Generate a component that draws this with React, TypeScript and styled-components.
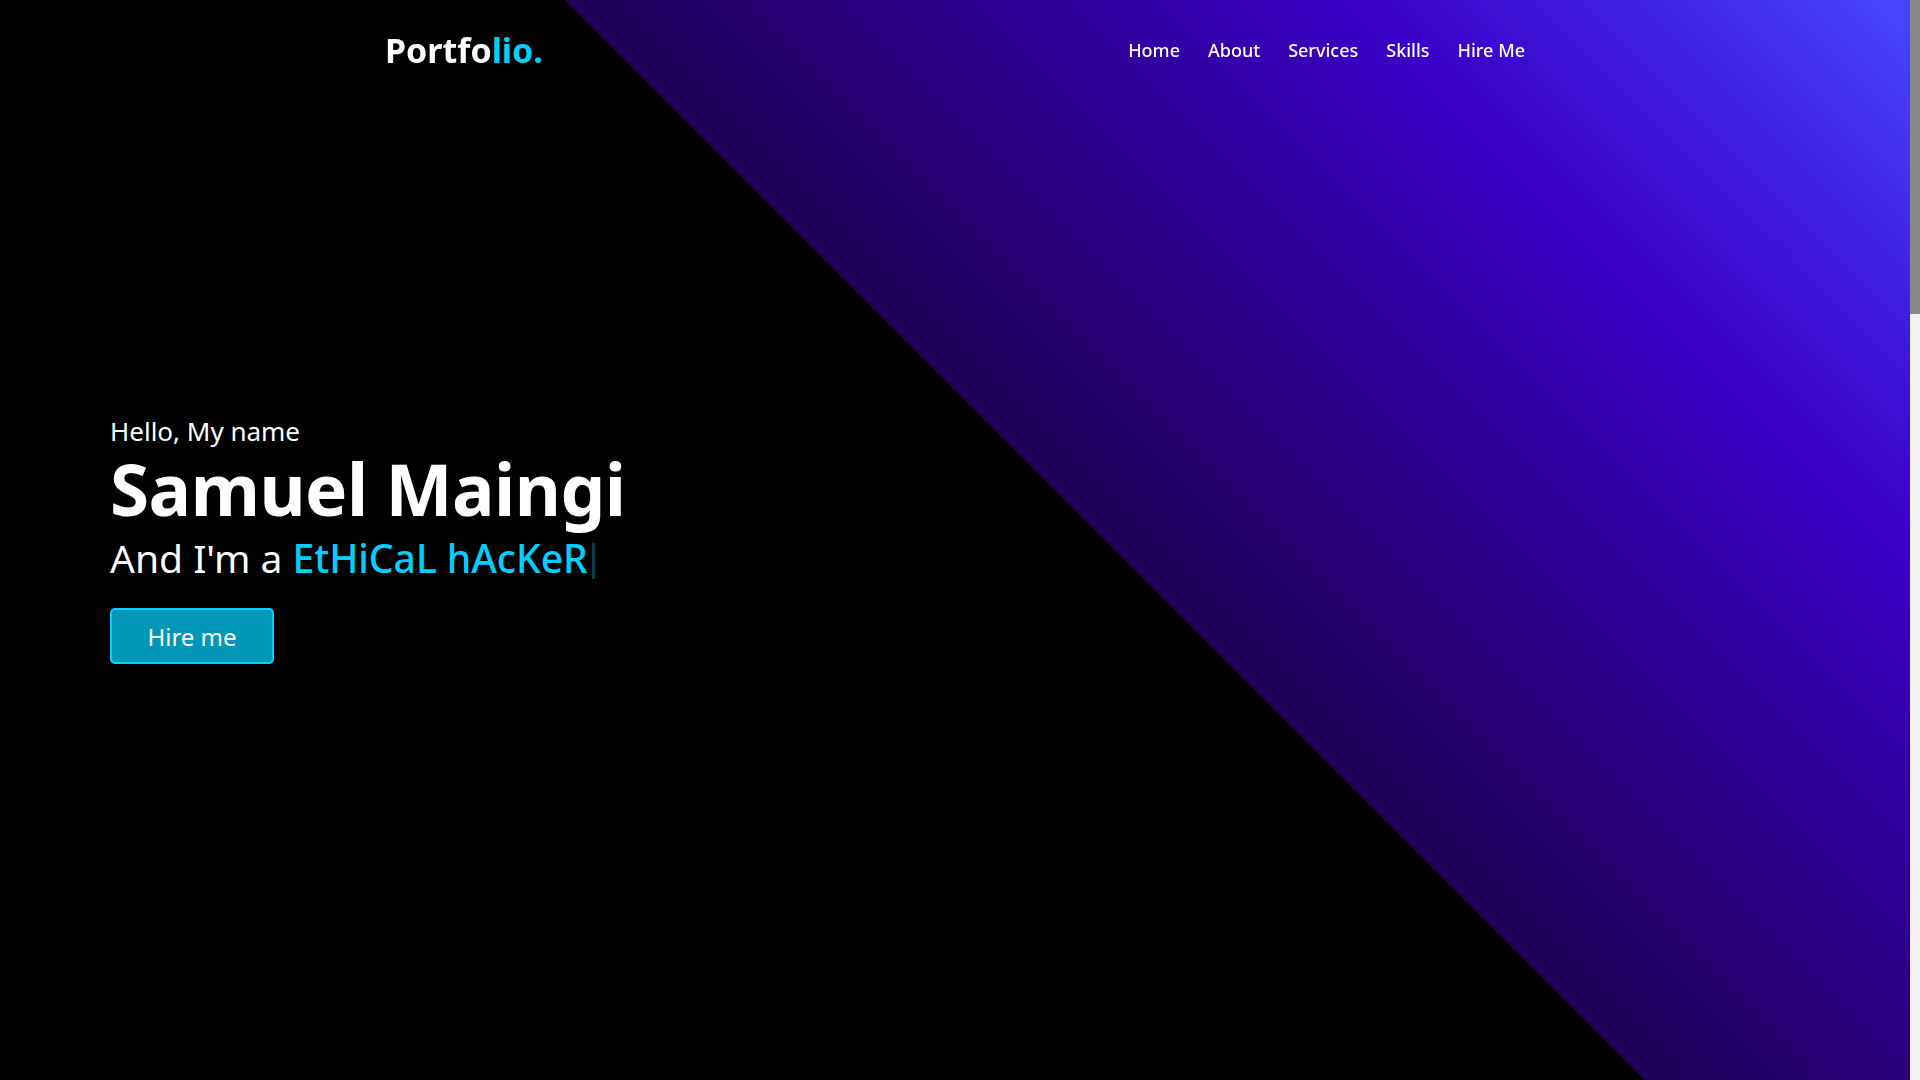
import React from "react";
import styled, { createGlobalStyle } from "styled-components";

const Global = createGlobalStyle`
  * { box-sizing: border-box; margin: 0; padding: 0; }
  html { overflow-y: scroll; }
  body {
    margin: 0 10px 0 0;
    background: #000;
    font-family: "Noto Sans", "Open Sans", sans-serif;
    color: #fff;
  }
  ::-webkit-scrollbar { width: 10px; }
  ::-webkit-scrollbar-track { background: #f1f1f1; }
  ::-webkit-scrollbar-thumb { background: #888; }
`;

const ScrollTrack = styled.div`
  position: fixed;
  top: 0;
  right: 0;
  bottom: 0;
  width: 10px;
  background: #f1f1f1;
  z-index: 20;
`;

const ScrollThumb = styled.div`
  width: 10px;
  height: 314px;
  background: #888;
`;

const Navbar = styled.nav`
  position: fixed;
  top: 0;
  left: 0;
  right: 10px;
  z-index: 10;
  height: 100px;
  display: flex;
  justify-content: center;
  align-items: center;
`;

const NavInner = styled.div`
  width: 1140px;
  display: flex;
  justify-content: space-between;
  align-items: center;
`;

const Logo = styled.a`
  font-size: 34px;
  font-weight: 700;
  color: #fff;
  text-decoration: none;
  span { color: #00cfff; }
`;

const Menu = styled.ul`
  list-style: none;
  display: flex;
  gap: 28px;
`;

const MenuLink = styled.a`
  color: #fff;
  text-decoration: none;
  font-size: 18px;
  font-weight: 500;
`;

const Hero = styled.section`
  height: 100vh;
  display: flex;
  flex-direction: column;
  justify-content: center;
  padding-left: 110px;
  background: linear-gradient(45deg, #000 55%, #1f0056 55%, #3a00c8 82%, #4747ff 100%);
`;

const Greeting = styled.div`
  font-size: 26px;
  line-height: 1.2;
`;

const Name = styled.h1`
  font-size: 71px;
  font-weight: 700;
  line-height: 1.28;
  letter-spacing: -0.5px;
  margin-top: -3px;
`;

const Role = styled.div`
  font-size: 39px;
  line-height: 1.3;
  display: flex;
  align-items: center;
  margin-top: -2px;
`;

const Typed = styled.span`
  color: #00cfff;
  font-weight: 500;
  margin-left: 10px;
`;

const Cursor = styled.span`
  display: inline-block;
  width: 3px;
  height: 36px;
  background: #0b3c48;
  margin-left: 4px;
  margin-top: 6px;
`;

const HireButton = styled.a`
  margin-top: 25px;
  width: 164px;
  height: 56px;
  display: flex;
  align-items: center;
  justify-content: center;
  background: #0097b8;
  border: 2px solid #00d2ff;
  border-radius: 5px;
  color: #fff;
  font-size: 24px;
  text-decoration: none;
`;

const Section = styled.section<{ $h: number }>`
  height: ${(p) => p.$h}px;
  background: #000;
`;

export default function App() {
  return (
    <>
      <Global />
      <ScrollTrack>
        <ScrollThumb />
      </ScrollTrack>
      <Navbar>
        <NavInner>
          <Logo href="#">Portfo<span>lio.</span></Logo>
          <Menu>
            {["Home", "About", "Services", "Skills", "Hire Me"].map((m) => (
              <li key={m}><MenuLink href="#">{m}</MenuLink></li>
            ))}
          </Menu>
        </NavInner>
      </Navbar>
      <Hero id="home">
        <Greeting>Hello, My name</Greeting>
        <Name>Samuel Maingi</Name>
        <Role>And I'm a <Typed>EtHiCaL hAcKeR</Typed><Cursor /></Role>
        <HireButton href="#">Hire me</HireButton>
      </Hero>
      <Section id="about" $h={900} />
      <Section id="services" $h={900} />
      <Section id="skills" $h={835} />
    </>
  );
}
